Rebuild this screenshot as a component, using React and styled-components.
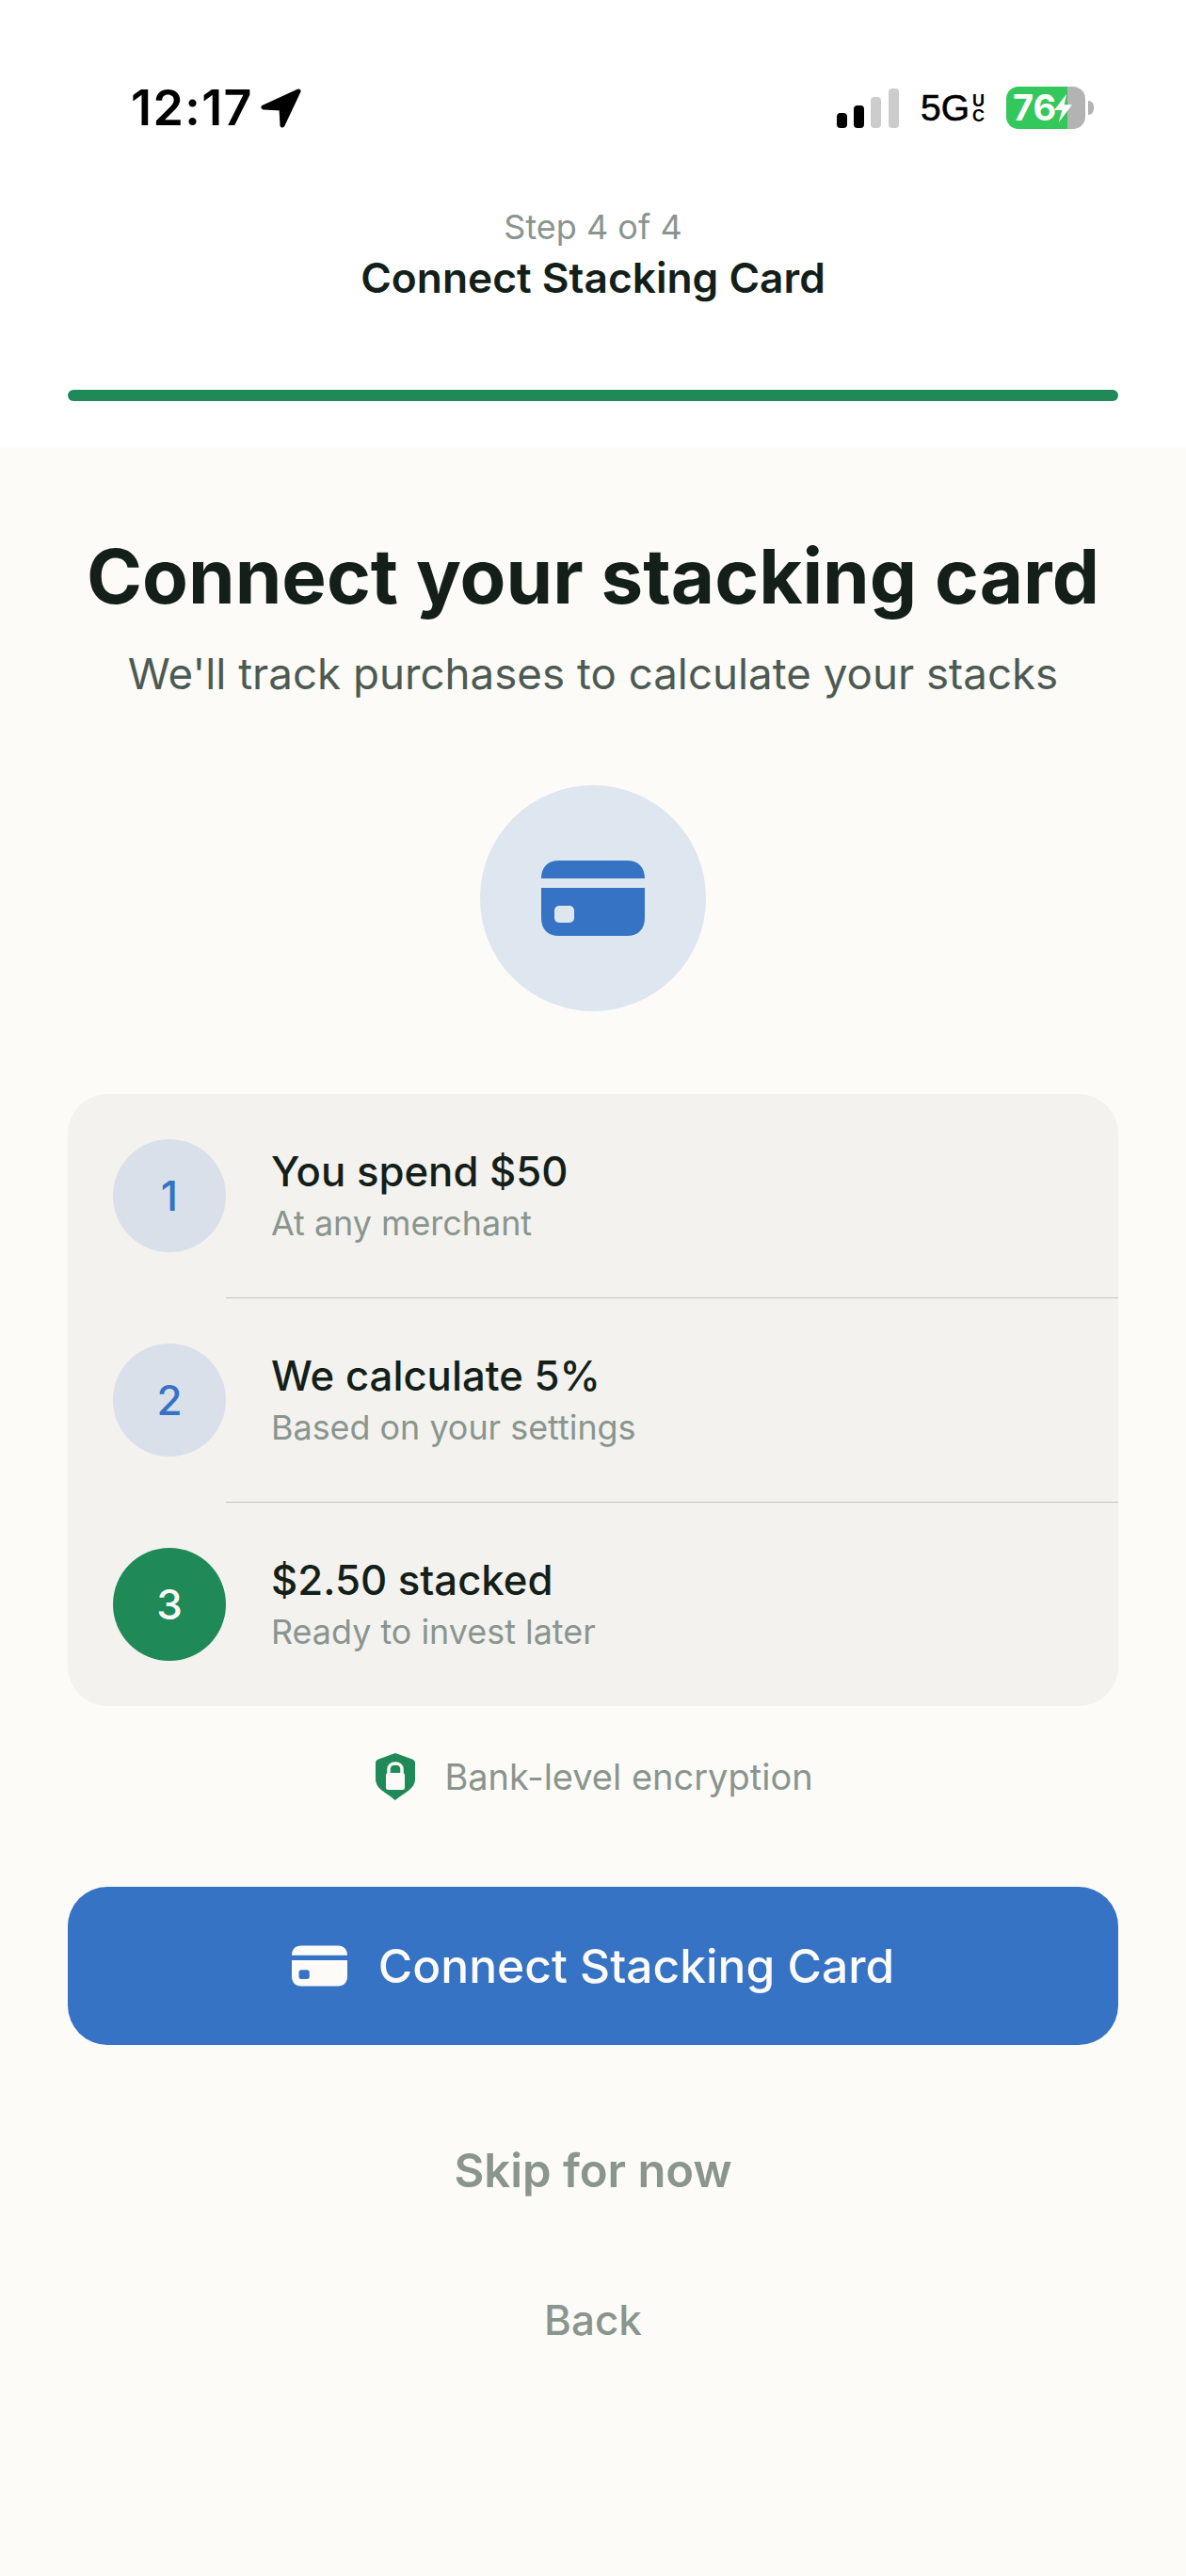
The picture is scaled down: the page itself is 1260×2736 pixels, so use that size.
import React from 'react';
import styled, { createGlobalStyle } from 'styled-components';

const COLORS = {
  page: '#fcfbf7',
  panel: '#f3f2ee',
  ink: '#141f1a',
  body: '#4d5a53',
  muted: '#8a958e',
  blue: '#3673c5',
  blueTint: '#dee6f0',
  stepTint: '#dae0ea',
  green: '#1f8a58',
  divider: '#c2c3bf',
};

const STEPS = [
  { id: 1, title: 'You spend $50', note: 'At any merchant' },
  { id: 2, title: 'We calculate 5%', note: 'Based on your settings' },
  { id: 3, title: '$2.50 stacked', note: 'Ready to invest later', done: true },
];

const CardIcon = ({ width, height, color, hole }) => (
  <svg width={width} height={height} viewBox="0 0 110 80">
    <path
      fill={color}
      d="M0 19C0 7 7 0 19 0H91C103 0 110 7 110 19H0ZM0 29H110V61C110 73 103 80 91 80H19C7 80 0 73 0 61V29Z"
    />
    <rect x="14" y="48" width="21" height="18" rx="5" fill={hole} />
  </svg>
);

const App = () => (
  <Page>
    <GlobalStyle />
    <Header>
      <StatusBar>
        <Clock>
          <Time>12:17</Time>
          <svg width="44" height="42" viewBox="0 0 44 42">
            <path
              fill="#000"
              stroke="#000"
              strokeWidth="5"
              strokeLinejoin="round"
              d="M40 3 3 20 22 21 23 39Z"
            />
          </svg>
        </Clock>
        <Indicators>
          <svg width="66" height="42" viewBox="0 0 66 42">
            <rect x="0" y="26" width="11" height="16" rx="4" fill="#000" />
            <rect x="18" y="18" width="11" height="24" rx="4" fill="#000" />
            <rect x="36" y="9" width="11" height="33" rx="4" fill="#ccc" />
            <rect x="55" y="0" width="11" height="42" rx="4" fill="#ccc" />
          </svg>
          <Network>
            <NetworkName>5G</NetworkName>
            <NetworkSuffix>
              <span>U</span>
              <span>C</span>
            </NetworkSuffix>
          </Network>
          <Battery>
            <BatteryLevel>76</BatteryLevel>
            <BoltIcon viewBox="0 0 16 32" width="19" height="30" preserveAspectRatio="none">
              <path fill="#fff" d="M11 0 0 18H7L4 32 16 12H9Z" />
            </BoltIcon>
            <BatteryCap />
          </Battery>
        </Indicators>
      </StatusBar>
      <StepLabel>Step 4 of 4</StepLabel>
      <HeaderTitle>Connect Stacking Card</HeaderTitle>
      <Progress />
    </Header>
    <Main>
      <Title>Connect your stacking card</Title>
      <Subtitle>We'll track purchases to calculate your stacks</Subtitle>
      <IconCircle>
        <CardIcon width={110} height={80} color={COLORS.blue} hole={COLORS.blueTint} />
      </IconCircle>
      <StepsPanel>
        {STEPS.map((step) => (
          <StepRow key={step.id}>
            <StepBadge $done={step.done}>{step.id}</StepBadge>
            <StepBody>
              <StepTitle>{step.title}</StepTitle>
              <StepNote>{step.note}</StepNote>
            </StepBody>
          </StepRow>
        ))}
      </StepsPanel>
      <Security>
        <svg width="42" height="50" viewBox="0 0 42 50">
          <path
            fill={COLORS.green}
            d="M21 0 39 6.5C41 7.2 42 8.5 42 10.5V27C42 33 39 37 34 40.5C30 43.5 26 46 21.500 49.500C21 50 20.500 50 20 49.500C16 46 12 43.500 8 40.500C3 37 0 33 0 27V10.500C0 8.500 1 7.200 3 6.500Z"
          />
          <path
            fill="none"
            stroke={COLORS.page}
            strokeWidth="3.500"
            d="M14 22V17C14 13 17 11 21 11C25 11 28 13 28 17V22"
          />
          <rect x="11" y="21" width="20" height="18" rx="2.500" fill={COLORS.page} />
        </svg>
        <SecurityText>Bank-level encryption</SecurityText>
      </Security>
      <PrimaryButton type="button">
        <CardIcon width={59} height={44} color={COLORS.page} hole={COLORS.blue} />
        Connect Stacking Card
      </PrimaryButton>
      <SkipButton type="button">Skip for now</SkipButton>
      <BackButton type="button">Back</BackButton>
    </Main>
  </Page>
);

const GlobalStyle = createGlobalStyle`
  html, body {
    margin: 0;
    padding: 0;
    background: ${COLORS.page};
  }

  * {
    box-sizing: border-box;
  }
`;

const Page = styled.div`
  width: 1260px;
  height: 2736px;
  overflow: hidden;
  background: ${COLORS.page};
  font-family: Inter, 'Liberation Sans', sans-serif;
  color: ${COLORS.ink};
`;

const Header = styled.header`
  height: 475px;
  padding: 0 72px;
  background: #fff;
  display: flex;
  flex-direction: column;
  align-items: center;
`;

const StatusBar = styled.div`
  align-self: stretch;
  height: 221px;
  padding: 88px 0 0 67px;
  display: flex;
  justify-content: space-between;
  align-items: flex-start;
`;

const Clock = styled.div`
  display: flex;
  align-items: center;
  gap: 8px;
  height: 54px;
`;

const Time = styled.span`
  font-size: 52px;
  font-weight: 600;
  line-height: 54px;
  letter-spacing: 1.4px;
  color: #000;
`;

const Indicators = styled.div`
  display: flex;
  align-items: center;
  gap: 23px;
  margin: 4px 35px 0 0;
`;

const Network = styled.span`
  display: flex;
  align-items: center;
  gap: 3px;
  color: #000;
`;

const NetworkName = styled.span`
  font-family: 'Liberation Sans', sans-serif;
  font-size: 39px;
  font-weight: 400;
  line-height: 42px;
  -webkit-text-stroke: 0.6px #000;
`;

const NetworkSuffix = styled.span`
  display: flex;
  flex-direction: column;
  font-family: 'Liberation Sans', sans-serif;
  font-size: 18px;
  font-weight: 700;
  line-height: 16px;
  text-align: center;
`;

const Battery = styled.div`
  position: relative;
  width: 84px;
  height: 45px;
  padding-left: 7px;
  border-radius: 13px;
  background: linear-gradient(90deg, #34c85c 0 65px, #b3b3b3 65px);
  display: flex;
  align-items: center;
`;

const BatteryLevel = styled.span`
  font-size: 38px;
  font-weight: 700;
  line-height: 45px;
  color: #fff;
`;

const BoltIcon = styled.svg`
  flex: none;
  margin-left: -2px;
`;

const BatteryCap = styled.span`
  position: absolute;
  top: 15px;
  right: -9px;
  width: 6px;
  height: 15px;
  border-radius: 0 6px 6px 0;
  background: #b3b3b3;
`;

const StepLabel = styled.div`
  font-size: 36px;
  line-height: 40px;
  color: ${COLORS.muted};
`;

const HeaderTitle = styled.h1`
  margin: 6px 0 0;
  font-size: 44.300px;
  font-weight: 600;
  line-height: 56px;
  color: ${COLORS.ink};
`;

const Progress = styled.div`
  align-self: stretch;
  height: 12px;
  margin-top: 91px;
  border-radius: 6px;
  background: ${COLORS.green};
`;

const Main = styled.main`
  padding: 0 72px;
  display: flex;
  flex-direction: column;
  align-items: center;
`;

const Title = styled.h2`
  margin: 91px 0 0;
  font-size: 79.800px;
  font-weight: 700;
  line-height: 92px;
  white-space: nowrap;
  color: ${COLORS.ink};
`;

const Subtitle = styled.p`
  margin: 30px 0 0;
  font-size: 45.700px;
  line-height: 56px;
  color: ${COLORS.body};
`;

const IconCircle = styled.div`
  width: 240px;
  height: 240px;
  margin-top: 90px;
  border-radius: 50%;
  background: ${COLORS.blueTint};
  display: flex;
  align-items: center;
  justify-content: center;
`;

const StepsPanel = styled.section`
  align-self: stretch;
  margin-top: 88px;
  border-radius: 42px;
  background: ${COLORS.panel};
  overflow: hidden;
`;

const StepRow = styled.div`
  height: 216px;
  padding-left: 48px;
  display: flex;
  align-items: center;
  position: relative;

  & + & {
    height: 217px;
    padding-top: 1px;
  }

  & + &::before {
    content: '';
    position: absolute;
    top: 0;
    left: 168px;
    right: 0;
    height: 1px;
    background: ${COLORS.divider};
  }
`;

const StepBadge = styled.div`
  flex: none;
  width: 120px;
  height: 120px;
  border-radius: 50%;
  background: ${(p) => (p.$done ? COLORS.green : COLORS.stepTint)};
  color: ${(p) => (p.$done ? COLORS.page : COLORS.blue)};
  font-size: 44px;
  font-weight: 500;
  display: flex;
  align-items: center;
  justify-content: center;
`;

const StepBody = styled.div`
  margin-left: 48px;
  padding-bottom: 3px;
`;

const StepTitle = styled.div`
  font-size: 43.700px;
  font-weight: 500;
  line-height: 54px;
  color: ${COLORS.ink};
`;

const StepNote = styled.div`
  margin-top: 6px;
  font-size: 35.900px;
  line-height: 42px;
  color: ${COLORS.muted};
`;

const Security = styled.div`
  margin-top: 50px;
  height: 50px;
  padding-left: 3px;
  display: flex;
  align-items: center;
  gap: 31px;
`;

const SecurityText = styled.span`
  font-size: 38px;
  line-height: 48px;
  color: ${COLORS.muted};
`;

const PrimaryButton = styled.button`
  align-self: stretch;
  height: 168px;
  margin-top: 92px;
  padding: 0;
  border: 0;
  border-radius: 42px;
  background: ${COLORS.blue};
  color: ${COLORS.page};
  font: 500 49.700px Inter, 'Liberation Sans', sans-serif;
  display: flex;
  align-items: center;
  justify-content: center;
  gap: 33px;
`;

const SkipButton = styled.button`
  margin-top: 103px;
  padding: 0;
  height: 60px;
  border: 0;
  background: none;
  color: ${COLORS.muted};
  font: 600 49px Inter, 'Liberation Sans', sans-serif;
`;

const BackButton = styled.button`
  margin-top: 102px;
  padding: 0;
  height: 50px;
  border: 0;
  background: none;
  color: ${COLORS.muted};
  font: 500 44px Inter, 'Liberation Sans', sans-serif;
`;

export default App;
